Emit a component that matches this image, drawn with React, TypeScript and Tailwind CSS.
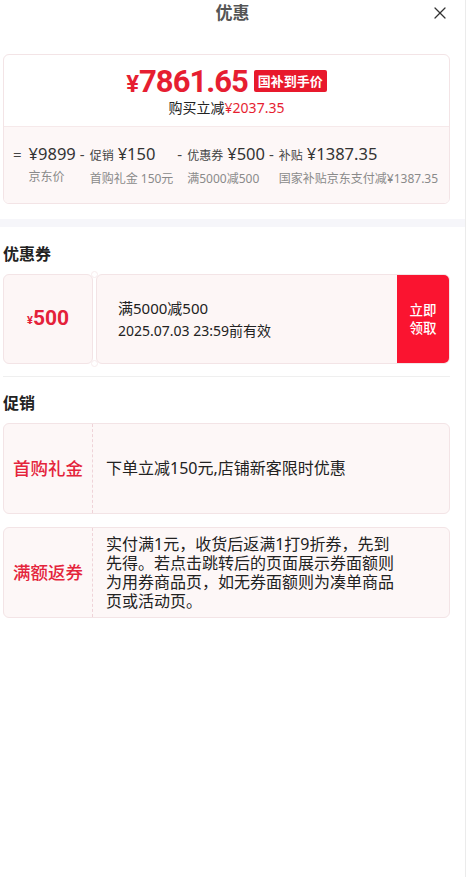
import React from 'react';
import { X } from 'lucide-react';

const breakdown = [
  { op: '=', label: '', amount: '¥9899', sub: '京东价' },
  { op: '-', label: '促销', amount: '¥150', sub: '首购礼金 150元' },
  { op: '-', label: '优惠券', amount: '¥500', sub: '满5000减500' },
  { op: '-', label: '补贴', amount: '¥1387.35', sub: '国家补贴京东支付减¥1387.35' },
];

const promos = [
  { tag: '首购礼金', text: '下单立减150元,店铺新客限时优惠' },
  {
    tag: '满额返券',
    text: '实付满1元，收货后返满1打9折券，先到先得。若点击跳转后的页面展示券面额则为用券商品页，如无券面额则为凑单商品页或活动页。',
  },
];

const App: React.FC = () => {
  return (
    <div className="w-[466px] min-h-[877px] bg-white border-r border-[#ebebeb] font-['Noto_Sans','Noto_Sans_CJK_SC',sans-serif] text-[#222]">
      {/* Header */}
      <div className="relative h-[26px] flex items-center justify-center">
        <h1 className="text-[17px] font-bold text-[#555] leading-none -mt-[2px]">优惠</h1>
        <X className="absolute right-[15px] top-[3px] w-[20px] h-[20px] text-[#333]" strokeWidth={1.5} />
      </div>

      {/* Price card */}
      <div className="mt-[28px] ml-[3px] w-[447px] rounded-[6px] border border-[#f3e4e6] overflow-hidden">
        <div className="h-[71px] flex flex-col items-center justify-center">
          <div className="flex items-center gap-[6px] h-[34px]">
            <div className="flex items-baseline text-[#e61e31] font-['Roboto',sans-serif] font-bold leading-none">
              <span className="text-[24px]">¥</span>
              <span className="text-[31px] tracking-[-1px]">7861.65</span>
            </div>
            <span className="h-[22px] px-[4px] flex items-center rounded-[2px] bg-[#e8192c] text-white text-[13px] font-bold leading-none">
              国补到手价
            </span>
          </div>
          <div className="text-[14px] leading-[18px] mt-[1px]">
            购买立减<span className="text-[#e61e31]">¥2037.35</span>
          </div>
        </div>
        <div className="h-[77px] bg-[#fdf7f7] border-t border-[#f6e9ea] pl-[9px] pt-[15px] flex gap-[4px]">
          {breakdown.map((b, i) => (
            <div key={i} className="flex">
              <span className={`text-[15px] leading-[24px] text-[#444] ${b.op === '=' ? 'mr-[7px]' : 'mr-[5px]'}`}>{b.op}</span>
              <div className="flex flex-col">
                <div className="flex items-baseline gap-[4px] leading-[24px]">
                  {b.label && <span className="text-[12px] text-[#444]">{b.label}</span>}
                  <span className="text-[16.5px] text-[#333]">{b.amount}</span>
                </div>
                <span className="text-[12px] leading-[16px] text-[#8a8a8a] mt-[3px]">{b.sub}</span>
              </div>
            </div>
          ))}
        </div>
      </div>

      {/* Separator band */}
      <div className="mt-[15px] h-[8px] bg-[#f6f6fa]" />

      {/* Coupons */}
      <h2 className="mt-[16px] ml-[3px] text-[16px] font-bold leading-[22px]">优惠券</h2>
      <div className="mt-[9px] ml-[3px] w-[447px] h-[90px] flex relative">
        <div className="w-[90px] rounded-[6px] border border-[#f3e4e6] bg-[#fdf6f6] flex items-center justify-center text-[#e4213a] font-['Roboto',sans-serif] font-bold">
          <span className="text-[11px] mt-[4px]">¥</span>
          <span className="text-[21px]">500</span>
        </div>
        <div className="flex-1 ml-[3px] flex rounded-[6px] border border-[#f3e4e6] bg-[#fdf6f6] overflow-hidden">
          <div className="flex-1 pl-[21px] flex flex-col justify-center">
            <span className="text-[15px] leading-[20px]">满5000减500</span>
            <span className="text-[14px] leading-[20px] mt-[3px]">2025.07.03 23:59前有效</span>
          </div>
          <div className="w-[52px] bg-[#fa1430] flex flex-col items-center justify-center text-white text-[13.5px] leading-[18px] font-medium">
            <span>立即</span>
            <span>领取</span>
          </div>
        </div>
        <span className="absolute left-[88px] -top-[3px] w-[7px] h-[7px] rounded-full bg-white border border-[#f7eced]" />
        <span className="absolute left-[88px] -bottom-[3px] w-[7px] h-[7px] rounded-full bg-white border border-[#f7eced]" />
      </div>
      <div className="mt-[12px] ml-[3px] w-[447px] h-px bg-[#efefef]" />

      {/* Promotions */}
      <h2 className="mt-[15px] ml-[3px] text-[16px] font-bold leading-[22px]">促销</h2>
      <div className="mt-[9px] ml-[3px] w-[447px] flex flex-col gap-[13px]">
        {promos.map((p, i) => (
          <div key={i} className="h-[91px] flex rounded-[6px] border border-[#f3e4e6] bg-[#fdf7f7]">
            <div className="w-[89px] shrink-0 border-r border-dashed border-[#efd3d8] flex items-center justify-center text-[17.5px] font-medium text-[#e4243c]">
              {p.tag}
            </div>
            <div className="flex-1 pl-[13px] pr-[52px] flex items-center text-[16px] leading-[19px] text-[#222]">
              <p>{p.text}</p>
            </div>
          </div>
        ))}
      </div>
    </div>
  );
};

export default App;
